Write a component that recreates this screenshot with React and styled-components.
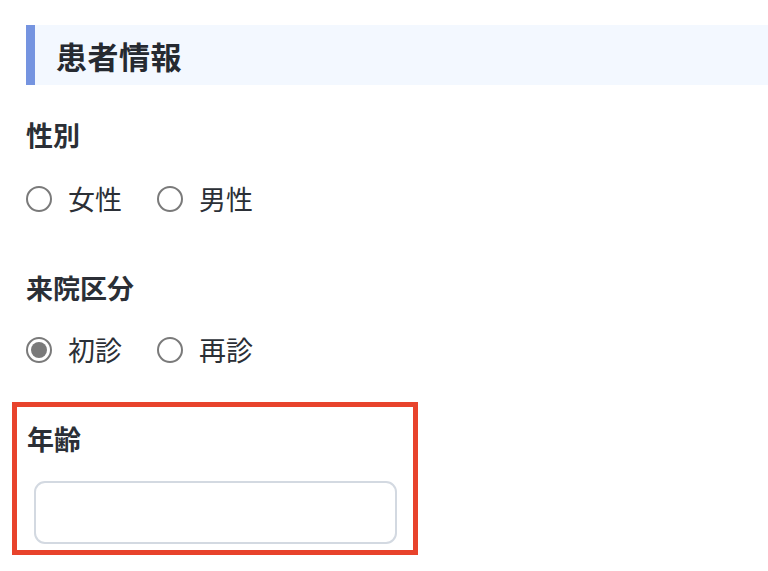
import React from "react";
import styled, { createGlobalStyle } from "styled-components";

const Global = createGlobalStyle`
  html, body { margin: 0; padding: 0; background: #ffffff; }
  body {
    font-family: "Noto Sans CJK JP", "Noto Sans", sans-serif;
    color: #2b2f36;
  }
`;

const Page = styled.div`
  width: 768px;
  height: 571px;
  overflow: hidden;
  box-sizing: border-box;
  padding: 25px 0 0 26px;
`;

const SectionHeader = styled.h2`
  margin: 0;
  height: 60px;
  box-sizing: border-box;
  display: flex;
  align-items: center;
  border-left: 9px solid #7594e0;
  background: #f3f8ff;
  padding-left: 21px;
  font-size: 31px;
  font-weight: 700;
  color: #262a31;
  letter-spacing: 0.5px;
`;

const Field = styled.div`
  display: flex;
  flex-direction: column;
  margin-top: ${(p) => p.$top}px;
`;

const Label = styled.div`
  font-size: 27px;
  line-height: 36px;
  font-weight: 700;
  color: #2b2f36;
`;

const RadioRow = styled.div`
  display: flex;
  align-items: center;
  gap: 35px;
  height: 36px;
  margin-top: ${(p) => p.$top}px;
`;

const Option = styled.label`
  display: flex;
  align-items: center;
  gap: 16px;
  font-size: 27px;
  line-height: 36px;
  color: #2b2f36;
`;

const Circle = styled.span`
  width: 26px;
  height: 26px;
  box-sizing: border-box;
  border-radius: 50%;
  border: 2px solid #7a7a7a;
  display: flex;
  align-items: center;
  justify-content: center;
  &::after {
    content: "";
    width: 16px;
    height: 16px;
    border-radius: 50%;
    background: ${(p) => (p.$checked ? "#7a7a7a" : "transparent")};
  }
`;

const Highlight = styled.div`
  margin-top: ${(p) => p.$top}px;
  margin-left: -14px;
  width: 406px;
  box-sizing: border-box;
  border: 5px solid #e8432c;
  padding: 14px 0 6px 10px;
  display: flex;
  flex-direction: column;
`;

const TextInput = styled.input`
  margin: 24px 0 0 7px;
  width: 363px;
  height: 63px;
  box-sizing: border-box;
  border: 2px solid #d3d9e1;
  border-radius: 11px;
  background: #fff;
  outline: none;
  font-family: inherit;
  font-size: 24px;
  padding: 0 14px;
`;

const Radio = ({ label, checked }) => (
  <Option>
    <Circle $checked={checked} />
    <span>{label}</span>
  </Option>
);

export default function App() {
  return (
    <>
      <Global />
      <Page>
        <SectionHeader>患者情報</SectionHeader>
        <Field $top={32}>
          <Label>性別</Label>
          <RadioRow $top={28}>
            <Radio label="女性" />
            <Radio label="男性" />
          </RadioRow>
        </Field>
        <Field $top={53}>
          <Label>来院区分</Label>
          <RadioRow $top={26}>
            <Radio label="初診" checked />
            <Radio label="再診" />
          </RadioRow>
        </Field>
        <Highlight $top={34}>
          <Label>年齢</Label>
          <TextInput type="text" />
        </Highlight>
      </Page>
    </>
  );
}
